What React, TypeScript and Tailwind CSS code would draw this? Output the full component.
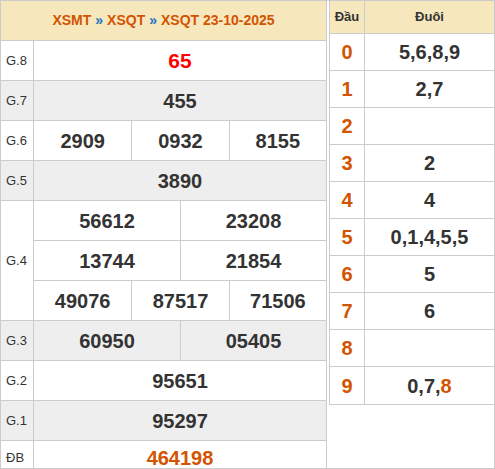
import React from "react";

const B = "border-[#cccccc]";

function Cells({ values, cls = "text-[#333333]" }: { values: string[]; cls?: string }) {
  const gridCls =
    values.length === 1 ? "grid-cols-1" : values.length === 2 ? "grid-cols-2" : "grid-cols-3";
  return (
    <div className={`flex-1 grid ${gridCls} h-full`}>
      {values.map((v, i) => (
        <div
          key={i}
          className={`flex items-center justify-center text-[20px] font-bold ${cls} ${i > 0 ? `border-l ${B}` : ""}`}
        >
          {v}
        </div>
      ))}
    </div>
  );
}

function Row({
  label,
  values,
  gray,
  cls,
  h = "h-[40px]",
}: {
  label: string;
  values: string[];
  gray?: boolean;
  cls?: string;
  h?: string;
}) {
  return (
    <div className={`flex ${h} shrink-0 border-b ${B} ${gray ? "bg-[#eeeeee]" : "bg-white"}`}>
      <div className={`w-[33px] shrink-0 border-r ${B} pl-[5px] flex items-center text-[13px] text-[#333333]`}>
        {label}
      </div>
      <Cells values={values} cls={cls} />
    </div>
  );
}

const loto: [string, React.ReactNode][] = [
  ["0", "5,6,8,9"],
  ["1", "2,7"],
  ["2", ""],
  ["3", "2"],
  ["4", "4"],
  ["5", "0,1,4,5,5"],
  ["6", "5"],
  ["7", "6"],
  ["8", ""],
  [
    "9",
    <>
      0,7,<span className="text-[#d35400]">8</span>
    </>,
  ],
];

export default function App() {
  return (
    <div
      className={`w-[495px] h-[469px] border ${B} overflow-hidden flex items-start bg-white`}
      style={{ fontFamily: '"Liberation Sans", Arial, sans-serif' }}
    >
      {/* Left table */}
      <div className={`w-[326px] shrink-0 h-[480px] border-r ${B} flex flex-col`}>
        <div
          className={`h-[40px] shrink-0 border-b ${B} bg-[#f6e7bd] flex items-center justify-center text-[14px] font-bold text-[#d35400]`}
        >
          XSMT <span className="text-[#1e73be] mx-[4px]">»</span> XSQT{" "}
          <span className="text-[#1e73be] mx-[4px]">»</span> XSQT 23-10-2025
        </div>
        <Row label="G.8" values={["65"]} cls="text-[#ff0000] text-[21px]" />
        <Row label="G.7" values={["455"]} gray />
        <Row label="G.6" values={["2909", "0932", "8155"]} />
        <Row label="G.5" values={["3890"]} gray />
        <div className="flex shrink-0 bg-white">
          <div
            className={`w-[33px] h-[120px] shrink-0 border-r border-b ${B} pl-[5px] flex items-center text-[13px] text-[#333333]`}
          >
            G.4
          </div>
          <div className="flex-1 flex flex-col">
            <div className={`h-[40px] border-b ${B}`}>
              <Cells values={["56612", "23208"]} />
            </div>
            <div className={`h-[40px] border-b ${B}`}>
              <Cells values={["13744", "21854"]} />
            </div>
            <div className={`h-[40px] border-b ${B}`}>
              <Cells values={["49076", "87517", "71506"]} />
            </div>
          </div>
        </div>
        <Row label="G.3" values={["60950", "05405"]} gray />
        <Row label="G.2" values={["95651"]} />
        <Row label="G.1" values={["95297"]} gray />
        <Row label="ĐB" values={["464198"]} cls="text-[#d35400]" h="h-[34px]" />
      </div>

      {/* Right table */}
      <div className={`ml-[2px] flex-1 border-l border-b ${B} flex flex-col`}>
        <div className={`h-[33px] flex border-b ${B} bg-[#f6e7bd] text-[13px] font-bold text-[#333333]`}>
          <div className={`w-[35px] shrink-0 border-r ${B} flex items-center justify-center`}>Đầu</div>
          <div className="flex-1 flex items-center justify-center">Đuôi</div>
        </div>
        {loto.map(([d, t], i) => (
          <div key={d} className={`h-[37px] flex ${i < loto.length - 1 ? `border-b ${B}` : ""} text-[20px] font-bold`}>
            <div className={`w-[35px] shrink-0 border-r ${B} flex items-center justify-center text-[#d35400]`}>
              {d}
            </div>
            <div className="flex-1 flex items-center justify-center text-[#333333]">{t}</div>
          </div>
        ))}
      </div>
    </div>
  );
}
